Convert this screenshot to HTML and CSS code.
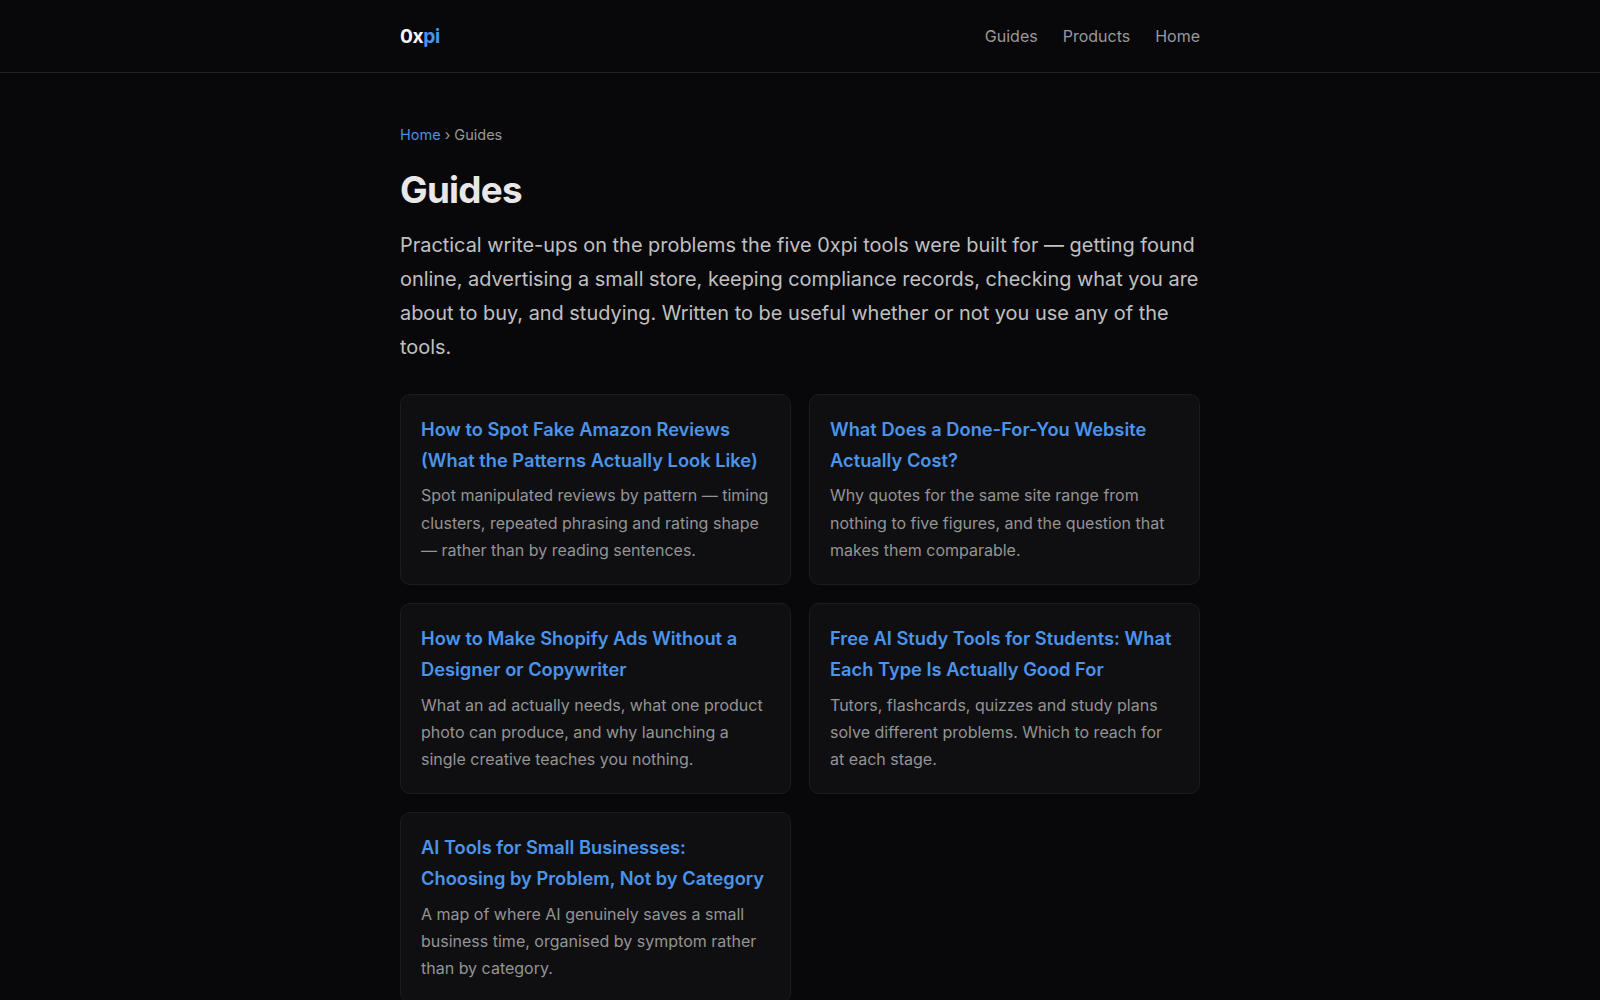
FILE: index.html
```html
<!DOCTYPE html>
<html lang="en">
<head>
<meta charset="utf-8">
<title>Guides — 0xpi</title>
<link rel="stylesheet" href="styles.css">
</head>
<body>
<header class="site-header">
  <div class="header-inner">
    <a class="logo" href="#">0x<span class="logo-accent">pi</span></a>
    <nav class="main-nav">
      <a href="#">Guides</a>
      <a href="#">Products</a>
      <a href="#">Home</a>
    </nav>
  </div>
</header>
<main class="page">
  <p class="breadcrumb"><a href="#">Home</a> › Guides</p>
  <h1 class="page-title">Guides</h1>
  <p class="intro">Practical write-ups on the problems the five 0xpi tools were built for — getting found online, advertising a small store, keeping compliance records, checking what you are about to buy, and studying. Written to be useful whether or not you use any of the tools.</p>
  <div class="card-grid">
    <article class="card">
      <h2 class="card-title"><a href="#">How to Spot Fake Amazon Reviews (What the Patterns Actually Look Like)</a></h2>
      <p class="card-text">Spot manipulated reviews by pattern — timing clusters, repeated phrasing and rating shape — rather than by reading sentences.</p>
    </article>
    <article class="card">
      <h2 class="card-title"><a href="#">What Does a Done-For-You Website Actually Cost?</a></h2>
      <p class="card-text">Why quotes for the same site range from nothing to five figures, and the question that makes them comparable.</p>
    </article>
    <article class="card">
      <h2 class="card-title"><a href="#">How to Make Shopify Ads Without a Designer or Copywriter</a></h2>
      <p class="card-text">What an ad actually needs, what one product photo can produce, and why launching a single creative teaches you nothing.</p>
    </article>
    <article class="card">
      <h2 class="card-title"><a href="#">Free AI Study Tools for Students: What Each Type Is Actually Good For</a></h2>
      <p class="card-text">Tutors, flashcards, quizzes and study plans solve different problems. Which to reach for at each stage.</p>
    </article>
    <article class="card">
      <h2 class="card-title"><a href="#">AI Tools for Small Businesses: Choosing by Problem, Not by Category</a></h2>
      <p class="card-text">A map of where AI genuinely saves a small business time, organised by symptom rather than by category.</p>
    </article>
  </div>
</main>
</body>
</html>
```
FILE: styles.css
```css
* { box-sizing: border-box; }
html, body { margin: 0; padding: 0; }
body {
  background: #08080b;
  color: #e5e5e5;
  font-family: Inter, "Liberation Sans", sans-serif;
  font-size: 16px;
  line-height: 1.7;
}
a { text-decoration: none; }
.site-header { border-bottom: 1px solid #212125; height: 73px; }
.header-inner {
  width: 800px;
  margin: 0 auto;
  height: 72px;
  display: flex;
  align-items: center;
  justify-content: space-between;
}
.logo { color: #f5f5f5; font-size: 19.2px; font-weight: 700; letter-spacing: -0.02em; }
.logo-accent { color: #4a94ea; }
.main-nav { display: flex; gap: 25px; padding-top: 2px; }
.main-nav a { color: #999999; font-size: 16px; }
.page { width: 800px; margin: 0 auto; padding-top: 50px; }
.breadcrumb { margin: 0 0 20.4px; color: #999999; font-size: 14.5px; }
.breadcrumb a { color: #4a90e2; }
.page-title {
  margin: 0 0 17.1px;
  color: #e8e8e8;
  font-size: 36.8px;
  font-weight: 700;
  letter-spacing: -0.02em;
  line-height: 1.2;
}
.intro { margin: 0 0 29px; color: #c0c0c0; font-size: 19.92px; }
.card-grid { display: grid; grid-template-columns: 1fr 1fr; gap: 18px; }
.card {
  background: #0f0f12;
  border: 1px solid #1c1c20;
  border-radius: 10px;
  padding: 19px 20px 20px;
}
.card-title { margin: 0 0 6.5px; font-size: 18.3px; font-weight: 600; }
.card-title a { color: #4a94ea; }
.card-text { margin: 0; color: #949494; font-size: 16px; }
```
